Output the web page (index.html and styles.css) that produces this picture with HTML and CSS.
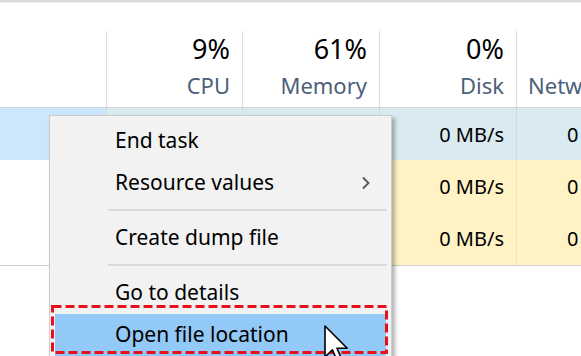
FILE: index.html
```html
<!DOCTYPE html>
<html lang="en">
<head>
  <meta charset="UTF-8">
  <title>Task Manager – Context Menu</title>
  <link rel="stylesheet" href="styles.css">
</head>
<body>
  <div class="window">
    <div class="topbar"></div>

    <div class="header">
      <div class="head-cell name"></div>
      <div class="head-cell"><span class="value">9%</span><span class="label">CPU</span></div>
      <div class="head-cell"><span class="value">61%</span><span class="label">Memory</span></div>
      <div class="head-cell"><span class="value">0%</span><span class="label">Disk</span></div>
      <div class="head-cell net"><span class="value">&nbsp;</span><span class="label">Network</span></div>
    </div>

    <!-- cpu and memory values are hidden under the menu -->
    <div class="row selected">
      <div class="cell name"></div>
      <div class="cell"></div>
      <div class="cell"></div>
      <div class="cell">0 MB/s</div>
      <div class="cell net">0 Mbps</div>
    </div>
    <div class="row busy">
      <div class="cell name"></div>
      <div class="cell"></div>
      <div class="cell"></div>
      <div class="cell">0 MB/s</div>
      <div class="cell net">0 Mbps</div>
    </div>
    <div class="row busy last">
      <div class="cell name"></div>
      <div class="cell"></div>
      <div class="cell"></div>
      <div class="cell">0 MB/s</div>
      <div class="cell net">0 Mbps</div>
    </div>

    <!-- right-click menu sits over the process list -->
    <div class="context-menu">
      <div class="item">End task</div>
      <div class="item">Resource values
        <svg class="chevron" width="10" height="14" viewBox="0 0 10 14">
          <path d="M2 1.5 L7.5 7 L2 12.5" fill="none" stroke="#555" stroke-width="1.8"/>
        </svg>
      </div>
      <div class="separator"></div>
      <div class="item">Create dump file</div>
      <div class="separator"></div>
      <div class="item">Go to details</div>
      <div class="item active">Open file location</div>
      <div class="item">Search online</div>
    </div>

    <svg class="annotation" width="337" height="49" viewBox="0 0 337 49">
      <rect x="1.5" y="1.5" width="334" height="46" fill="none" stroke="#e8101a" stroke-width="3" stroke-dasharray="9 4"/>
    </svg>

    <svg class="cursor" width="26" height="40" viewBox="0 0 13 20">
      <path d="M0.5 0.5 L0.5 16 L4.2 12.4 L6.8 18.4 L9 17.4 L6.5 11.6 L11.6 11.6 Z" fill="#fff" stroke="#000" stroke-width="0.8" stroke-linejoin="round"/>
    </svg>
  </div>
</body>
</html>
```

FILE: styles.css
```css
body {
  margin: 0;
  background: #fff;
  font-family: 'Noto Sans', 'Open Sans', sans-serif;
  color: #000;
}

.window {
  position: relative;
  width: 581px;
  height: 356px;
  overflow: hidden;
}

.topbar {
  height: 2px;
  background: #d9d9d9;
  border-bottom: 1px solid #f0f0f0;
}

.header,
.row {
  display: grid;
  grid-template-columns: 106px 136px 137px 137px 160px;
}

.header {
  height: 104px;
  border-bottom: 1px solid #d4d4d4;
}

.head-cell {
  margin-top: 28px;
  border-left: 1px solid #dcdcdc;
  padding-right: 12px;
  display: flex;
  flex-direction: column;
  align-items: flex-end;
}

.head-cell.name {
  border-left: none;
}

.head-cell.net {
  align-items: flex-start;
  padding-left: 11px;
}

.value {
  font-size: 27px;
  line-height: 34px;
  margin-top: 1px;
}

.label {
  font-size: 22px;
  line-height: 30px;
  margin-top: 4px;
  color: #4d5f7b;
}

.row {
  height: 52px;
}

.row.last {
  height: 53px;
  border-bottom: 1px solid #cfcfcf;
}

.cell {
  display: flex;
  align-items: center;
  justify-content: flex-end;
  padding-right: 12px;
  font-size: 20px;
  border-left: 1px solid rgba(0, 0, 0, 0.05);
}

.cell.name {
  border-left: none;
}

.cell.net {
  justify-content: flex-start;
  padding-left: 50px;
}

.selected .cell {
  background: #d9eaf1;
}

.selected .cell.name {
  background: #cce6fb;
}

.busy .cell {
  background: #fff3c6;
}

.busy .cell.name {
  background: #fff;
}

.context-menu {
  position: absolute;
  left: 49px;
  top: 115px;
  width: 341px;
  padding: 4px 0;
  background: #f2f2f2;
  border: 1px solid #cccccc;
  box-shadow: 3px 3px 4px rgba(0, 0, 0, 0.3);
  font-size: 21px;
}

.item {
  position: relative;
  height: 42px;
  line-height: 41px;
  margin: 0 5px;
  padding-left: 60px;
}

.item.active {
  background: #93c9f6;
}

.chevron {
  position: absolute;
  right: 15px;
  top: 14px;
}

.separator {
  height: 2px;
  margin: 5px 4px 6px 58px;
  background: #dadada;
}

.annotation {
  position: absolute;
  left: 51px;
  top: 305px;
}

.cursor {
  position: absolute;
  left: 324px;
  top: 325px;
}
```
